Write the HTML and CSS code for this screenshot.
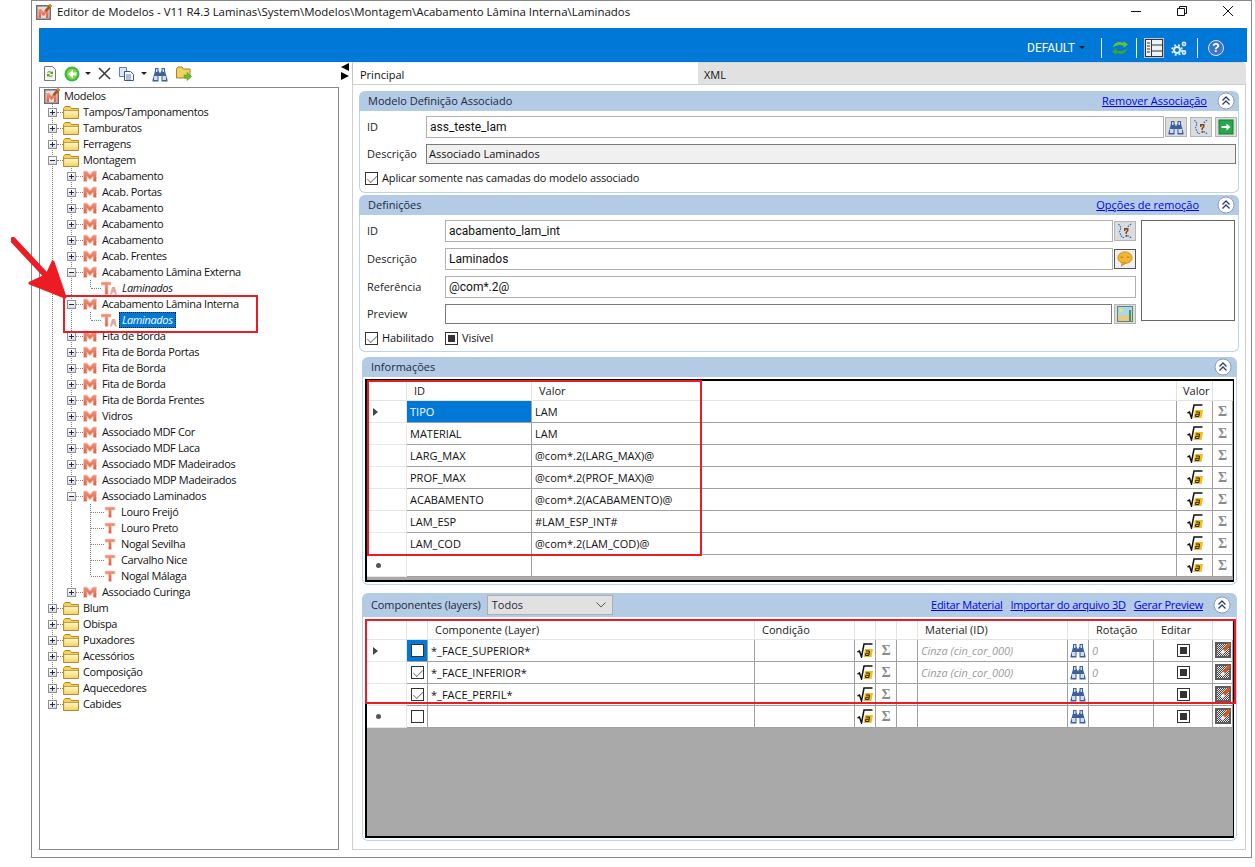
FILE: index.html
```html
<!DOCTYPE html>
<html lang="pt">
<head>
<meta charset="utf-8">
<title>Editor de Modelos</title>
<link rel="stylesheet" href="styles.css">
</head>
<body>
<svg class="defs" width="0" height="0" aria-hidden="true">
  <defs>
    <linearGradient id="salmon" x1="0" y1="0" x2="0" y2="1"><stop offset="0" stop-color="#f2957c"/><stop offset="1" stop-color="#e25c42"/></linearGradient>
    <symbol id="m" viewBox="0 0 14 12"><path d="M.5 11.500V1H4l3 3.600L10 1h3.500v10.500H10V6.500L7 9.800 4 6.500v5z" fill="url(#salmon)" stroke="#f8cdbf" stroke-width=".8"/></symbol>
    <symbol id="logo" viewBox="0 0 16 16"><rect x=".75" y="1.750" width="13.500" height="13.500" fill="#e4dcda" stroke="#6e6e6e" stroke-width="1.500"/><path d="M2.500 14V5h2.500l2.500 3L10 5h2.500v9H10V9.500L7.500 12 5 9.500V14z" fill="url(#salmon)"/><path d="M8.500 6.500 14 0l2 2-5.500 6z" fill="#a5561c"/><path d="M12.500 1.500 14 0l2 2-1.500 1.500z" fill="#e2812c"/></symbol>
    <linearGradient id="fold" x1="0" y1="0" x2="0" y2="1"><stop offset="0" stop-color="#fff3c0"/><stop offset="1" stop-color="#f6d368"/></linearGradient>
    <symbol id="folder" viewBox="0 0 16 14"><path d="M.5 3.500 2 1.500h5l1.500 2h7v10H.5z" fill="#f3d067" stroke="#b08c2c"/><path d="M1.500 6h13.500v7H1.500z" fill="url(#fold)"/><path d="M.5 5.500h15" stroke="#c4a035"/></symbol>
    <symbol id="ta" viewBox="0 0 16 14"><path d="M0 1h10v3H7v9.500H4V4H0z" fill="url(#salmon)" stroke="#f8cdbf" stroke-width=".6"/><path d="M9 13.500 11 6h3l2 7.500h-2l-.4-2h-2.200l-.4 2z" fill="#e6a79a"/></symbol>
    <symbol id="t" viewBox="0 0 12 12"><path d="M1 1h10v3H7.500v7.500h-3V4H1z" fill="url(#salmon)" stroke="#f8cdbf" stroke-width=".6"/></symbol>
    <symbol id="binoc" viewBox="0 0 16 16"><path d="M3 2h3.500v3H7v1.500h2V5h.5V2H13v3l2.500 9v1.500H9.500V10h-3v5.500H.5V14L3 5z" fill="#3c5f9e"/><path d="M2 10h3.500v4H2zM10.500 10H14v4h-3.500zM4 3h1.500v3H4zM10.500 3H12v3h-1.500z" fill="#cfdcf0"/></symbol>
    <symbol id="path" viewBox="0 0 16 16"><path d="M1.500 1 4 4.500 2.500 9 5 14.500h2.500M14 1 10 4.500M10.500 12.500l4 2.500" fill="none" stroke="#1f74e0" stroke-width="1.200" stroke-dasharray="1.600 1"/><path d="M7 5h4.500v3L10 9.500V11H8.500V9l1.300-1.200V6.500H8.500V8H7z" fill="#7a4a1c"/><rect x="8.500" y="12" width="1.800" height="1.800" fill="#7a4a1c"/></symbol>
    <symbol id="go" viewBox="0 0 16 16"><rect x="1" y="1" width="14" height="14" fill="#27a84a" stroke="#16783a"/><path d="M3.500 7h5V4.500L12.500 8l-4 3.500V9h-5z" fill="#fff"/></symbol>
    <symbol id="speech" viewBox="0 0 18 18"><ellipse cx="9" cy="7.500" rx="8" ry="6.500" fill="#f2b632" stroke="#c98a16"/><path d="M6 13l-1 4 5-3.500z" fill="#f2b632" stroke="#c98a16"/><path d="M4 7h3M11 7h3" stroke="#b06d10"/></symbol>
    <symbol id="image" viewBox="0 0 16 16"><rect x=".5" y=".5" width="15" height="15" fill="#a9d9ee" stroke="#6a7f70"/><circle cx="4" cy="4" r="1.700" fill="#f6e65a"/><path d="M1 9h14v6H1z" fill="#e3c98a"/><path d="M12 4h2v11h-2z" fill="#3f9a56"/></symbol>
    <symbol id="sqrt" viewBox="0 0 16 16"><path d="M.5 10l2-1 2 6L7 2h8.500" fill="none" stroke="#111" stroke-width="1.500"/><path d="M8 7h8l-1.500 8h-8z" fill="#f6bd16"/><path d="M9 9h3.500l-.7 4.500H8.500l.3-2.200h3" fill="none" stroke="#1c1c1c"/></symbol>
    <pattern id="checker" width="2" height="2" patternUnits="userSpaceOnUse"><rect width="2" height="2" fill="#e8e8e8"/><rect width="1" height="1" fill="#444"/><rect x="1" y="1" width="1" height="1" fill="#444"/></pattern>
    <symbol id="brush" viewBox="0 0 16 16"><rect x="1" y="1" width="14" height="14" fill="url(#checker)" stroke="#5c5c5c" stroke-width="2"/><path d="M8 7.500 13.500.5 16 3l-6 6.500z" fill="#d9561c"/><path d="M5.500 10 8 7.500 10 9.500 7.500 12z" fill="#f2f2f2"/></symbol>
    <symbol id="collapse" viewBox="0 0 18 18"><circle cx="9" cy="9" r="8" fill="#fff" stroke="#8f9db8"/><path d="M5.500 8.500 9 5l3.500 3.500M5.500 12.500 9 9l3.500 3.500" fill="none" stroke="#2c3f70" stroke-width="1.300"/></symbol>
  </defs>
</svg>

<div class="window">
  <header class="titlebar">
    <svg class="title-ico"><use href="#logo"/></svg>
    <span class="title-text">Editor de Modelos - V11 R4.3 Laminas\System\Modelos\Montagem\Acabamento Lâmina Interna\Laminados</span>
    <div class="winbtns">
      <button class="winbtn"><svg width="12" height="12" viewBox="0 0 12 12"><path d="M1 6.500h10" stroke="#111"/></svg></button>
      <button class="winbtn"><svg width="12" height="12" viewBox="0 0 12 12"><path d="M1.500 3.500h7v7h-7zM3.500 3.500v-2h7v7h-2" fill="none" stroke="#111"/></svg></button>
      <button class="winbtn"><svg width="12" height="12" viewBox="0 0 12 12"><path d="M1 1l10 10M11 1 1 11" stroke="#111"/></svg></button>
    </div>
  </header>

  <div class="content">
    <div class="bluebar">
      <span class="profile">DEFAULT</span><i class="caret dark-c"></i>
      <i class="bsep s1"></i>
      <svg class="bico" viewBox="0 0 16 16"><path d="M1 7.500C1.500 3 6.500.5 11.500 3V1L16 4.500l-4.500 3.500V5.800C8 4 4 5 1 7.500z" fill="#62c234"/><path d="M15 8.500C14.500 13 9.500 15.500 4.500 13v2L0 11.500 4.500 8v2.200C8 12 12 11 15 8.500z" fill="#3fa32b"/></svg>
      <i class="bsep s2"></i>
      <span class="hl"><svg width="18" height="18" viewBox="0 0 18 18"><rect x=".5" y=".5" width="17" height="17" fill="#eef1f5" stroke="#333"/><path d="M6.500 1v16M6.500 6h11M6.500 12h11M2 4h3M2 7h3M2 10h3M2 13h3" stroke="#333"/></svg></span>
      <svg class="bico gears" viewBox="0 0 16 16"><circle cx="6" cy="10" r="3" fill="none" stroke="#e3ecf6" stroke-width="2"/><circle cx="6" cy="10" r="5" fill="none" stroke="#e3ecf6" stroke-width="1.600" stroke-dasharray="2 2"/><circle cx="13" cy="4" r="1.600" fill="none" stroke="#e3ecf6" stroke-width="1.600"/><circle cx="13" cy="12.500" r="1.600" fill="none" stroke="#e3ecf6" stroke-width="1.600"/></svg>
      <i class="bsep s3"></i>
      <span class="help">?</span>
    </div>

    <div class="split">
      <aside class="leftcol">
        <div class="toolbar">
          <svg class="tb doc" viewBox="0 0 12 15"><path d="M.5.500h8l3 3v11H.5z" fill="#f6f6f0" stroke="#778"/><path d="M3 7c.5-2 3-2.500 5-1l1-1v3H6l1-1C6 6 4.500 6 3 7zM9 9c-.5 2-3 2.500-5 1l-1 1V8h3l-1 1c1 1 2.500 1 4 0z" fill="#5aa02c"/></svg>
          <svg class="tb back" viewBox="0 0 16 16"><circle cx="8" cy="8" r="7.500" fill="#39b54a"/><circle cx="8" cy="8" r="5.500" fill="#7fd63f"/><path d="M9 3.500v3h3.500v3H9v3L4 8z" fill="#fff"/></svg>
          <i class="caret c1"></i>
          <svg class="tb del" viewBox="0 0 13 13"><path d="M1 1l11 11M12 1 1 12" stroke="#3c3c3c" stroke-width="1.600"/></svg>
          <svg class="tb copy" viewBox="0 0 15 14"><path d="M.5.500h7v9h-7z" fill="#dce7f7" stroke="#5b7fb5"/><path d="M5.500 4.500h6l3 3v6h-9z" fill="#fff" stroke="#35579a"/><path d="M7 8h5M7 10h5M7 12h5" stroke="#5b7fb5"/></svg>
          <i class="caret c2"></i>
          <svg class="tb find"><use href="#binoc"/></svg>
          <svg class="tb fwd" viewBox="0 0 16 15"><path d="M.5 3 2 1h4l1.500 2h6.500v9H.5z" fill="#f2d25e" stroke="#a5852a"/><path d="M8 9h3V6.500l4.500 4-4.500 4V12H8z" fill="#6cbf2f" stroke="#4a8f1f" stroke-width=".5"/></svg>
        </div>
        <nav class="tree">
          <div class="row root"><svg class="ico-logo"><use href="#logo"/></svg><span class="lab-root">Modelos</span></div>
          <ul class="l1">
            <li><div class="row"><i class="exp plus"></i><i class="conn"></i><svg class="ico-f"><use href="#folder"/></svg><span class="lab">Tampos/Tamponamentos</span></div></li>
            <li><div class="row"><i class="exp plus"></i><i class="conn"></i><svg class="ico-f"><use href="#folder"/></svg><span class="lab">Tamburatos</span></div></li>
            <li><div class="row"><i class="exp plus"></i><i class="conn"></i><svg class="ico-f"><use href="#folder"/></svg><span class="lab">Ferragens</span></div></li>
            <li><div class="row"><i class="exp"></i><i class="conn"></i><svg class="ico-f"><use href="#folder"/></svg><span class="lab">Montagem</span></div>
              <ul class="l2">
                <li><div class="row"><i class="exp plus"></i><i class="conn"></i><svg class="ico-m"><use href="#m"/></svg><span class="lab2">Acabamento</span></div></li>
                <li><div class="row"><i class="exp plus"></i><i class="conn"></i><svg class="ico-m"><use href="#m"/></svg><span class="lab2">Acab. Portas</span></div></li>
                <li><div class="row"><i class="exp plus"></i><i class="conn"></i><svg class="ico-m"><use href="#m"/></svg><span class="lab2">Acabamento</span></div></li>
                <li><div class="row"><i class="exp plus"></i><i class="conn"></i><svg class="ico-m"><use href="#m"/></svg><span class="lab2">Acabamento</span></div></li>
                <li><div class="row"><i class="exp plus"></i><i class="conn"></i><svg class="ico-m"><use href="#m"/></svg><span class="lab2">Acabamento</span></div></li>
                <li><div class="row"><i class="exp plus"></i><i class="conn"></i><svg class="ico-m"><use href="#m"/></svg><span class="lab2">Acab. Frentes</span></div></li>
                <li><div class="row"><i class="exp"></i><i class="conn"></i><svg class="ico-m"><use href="#m"/></svg><span class="lab2">Acabamento Lâmina Externa</span></div>
                  <ul class="l3"><li><div class="row"><i class="conn long"></i><svg class="ico-ta"><use href="#ta"/></svg><span class="lab3">Laminados</span></div></li></ul>
                </li>
                <li><div class="row"><i class="exp"></i><i class="conn"></i><svg class="ico-m"><use href="#m"/></svg><span class="lab2">Acabamento Lâmina Interna</span></div>
                  <ul class="l3"><li><div class="row"><i class="conn long"></i><svg class="ico-ta"><use href="#ta"/></svg><span class="lab3 selected">Laminados</span></div></li></ul>
                </li>
                <li><div class="row"><i class="exp plus"></i><i class="conn"></i><svg class="ico-m"><use href="#m"/></svg><span class="lab2">Fita de Borda</span></div></li>
                <li><div class="row"><i class="exp plus"></i><i class="conn"></i><svg class="ico-m"><use href="#m"/></svg><span class="lab2">Fita de Borda Portas</span></div></li>
                <li><div class="row"><i class="exp plus"></i><i class="conn"></i><svg class="ico-m"><use href="#m"/></svg><span class="lab2">Fita de Borda</span></div></li>
                <li><div class="row"><i class="exp plus"></i><i class="conn"></i><svg class="ico-m"><use href="#m"/></svg><span class="lab2">Fita de Borda</span></div></li>
                <li><div class="row"><i class="exp plus"></i><i class="conn"></i><svg class="ico-m"><use href="#m"/></svg><span class="lab2">Fita de Borda Frentes</span></div></li>
                <li><div class="row"><i class="exp plus"></i><i class="conn"></i><svg class="ico-m"><use href="#m"/></svg><span class="lab2">Vidros</span></div></li>
                <li><div class="row"><i class="exp plus"></i><i class="conn"></i><svg class="ico-m"><use href="#m"/></svg><span class="lab2">Associado MDF Cor</span></div></li>
                <li><div class="row"><i class="exp plus"></i><i class="conn"></i><svg class="ico-m"><use href="#m"/></svg><span class="lab2">Associado MDF Laca</span></div></li>
                <li><div class="row"><i class="exp plus"></i><i class="conn"></i><svg class="ico-m"><use href="#m"/></svg><span class="lab2">Associado MDF Madeirados</span></div></li>
                <li><div class="row"><i class="exp plus"></i><i class="conn"></i><svg class="ico-m"><use href="#m"/></svg><span class="lab2">Associado MDP Madeirados</span></div></li>
                <li><div class="row"><i class="exp"></i><i class="conn"></i><svg class="ico-m"><use href="#m"/></svg><span class="lab2">Associado Laminados</span></div>
                  <ul class="l3">
                    <li><div class="row"><i class="conn longer"></i><svg class="ico-t"><use href="#t"/></svg><span class="lab3">Louro Freijó</span></div></li>
                    <li><div class="row"><i class="conn longer"></i><svg class="ico-t"><use href="#t"/></svg><span class="lab3">Louro Preto</span></div></li>
                    <li><div class="row"><i class="conn longer"></i><svg class="ico-t"><use href="#t"/></svg><span class="lab3">Nogal Sevilha</span></div></li>
                    <li><div class="row"><i class="conn longer"></i><svg class="ico-t"><use href="#t"/></svg><span class="lab3">Carvalho Nice</span></div></li>
                    <li><div class="row"><i class="conn longer"></i><svg class="ico-t"><use href="#t"/></svg><span class="lab3">Nogal Málaga</span></div></li>
                  </ul>
                </li>
                <li><div class="row"><i class="exp plus"></i><i class="conn"></i><svg class="ico-m"><use href="#m"/></svg><span class="lab2">Associado Curinga</span></div></li>
              </ul>
            </li>
            <li><div class="row"><i class="exp plus"></i><i class="conn"></i><svg class="ico-f"><use href="#folder"/></svg><span class="lab">Blum</span></div></li>
            <li><div class="row"><i class="exp plus"></i><i class="conn"></i><svg class="ico-f"><use href="#folder"/></svg><span class="lab">Obispa</span></div></li>
            <li><div class="row"><i class="exp plus"></i><i class="conn"></i><svg class="ico-f"><use href="#folder"/></svg><span class="lab">Puxadores</span></div></li>
            <li><div class="row"><i class="exp plus"></i><i class="conn"></i><svg class="ico-f"><use href="#folder"/></svg><span class="lab">Acessórios</span></div></li>
            <li><div class="row"><i class="exp plus"></i><i class="conn"></i><svg class="ico-f"><use href="#folder"/></svg><span class="lab">Composição</span></div></li>
            <li><div class="row"><i class="exp plus"></i><i class="conn"></i><svg class="ico-f"><use href="#folder"/></svg><span class="lab">Aquecedores</span></div></li>
            <li><div class="row"><i class="exp plus"></i><i class="conn"></i><svg class="ico-f"><use href="#folder"/></svg><span class="lab">Cabides</span></div></li>
          </ul>
        </nav>
      </aside>

      <div class="splitter"><i class="arr-l"></i><i class="arr-r"></i></div>

      <main class="rightcol">
        <div class="tabs"><span class="tab active">Principal</span><span class="tab">XML</span></div>
        <div class="tabpage">
          <section class="sec s-assoc">
            <div class="sec-h"><span>Modelo Definição Associado</span><a class="link push">Remover Associação</a><svg class="coll"><use href="#collapse"/></svg></div>
            <div class="sec-b">
              <div class="field f1"><label class="lbl w59">ID</label><span class="input grow">ass_teste_lam</span>
                <span class="btn b1"><svg><use href="#binoc"/></svg></span><span class="btn"><svg><use href="#path"/></svg></span><span class="btn"><svg><use href="#go"/></svg></span></div>
              <div class="field f2"><label class="lbl w59">Descrição</label><span class="input grow disabled">Associado Laminados</span></div>
              <div class="field f3"><i class="chk on"></i><span>Aplicar somente nas camadas do modelo associado</span></div>
            </div>
          </section>

          <section class="sec s-def">
            <div class="sec-h"><span>Definições</span><a class="link push">Opções de remoção</a><svg class="coll c-wide"><use href="#collapse"/></svg></div>
            <div class="sec-b def-b">
              <div class="def-form">
                <div class="field"><label class="lbl w78">ID</label><span class="input grow">acabamento_lam_int</span><span class="btn b2"><svg><use href="#path"/></svg></span></div>
                <div class="field"><label class="lbl w78">Descrição</label><span class="input grow">Laminados</span><span class="btn b2 pressed"><svg><use href="#speech"/></svg></span></div>
                <div class="field"><label class="lbl w78">Referência</label><span class="input grow">@com*.2@</span></div>
                <div class="field short"><label class="lbl w78">Preview</label><span class="input grow dark"></span><span class="btn b2 b3"><svg><use href="#image"/></svg></span></div>
                <div class="field checks"><i class="chk on"></i><span class="hab">Habilitado</span><i class="chk sq"></i><span>Visível</span></div>
              </div>
              <div class="preview"></div>
            </div>
          </section>

          <section class="sec s-info">
            <div class="sec-h"><span>Informações</span><svg class="coll push"><use href="#collapse"/></svg></div>
            <div class="sec-b grid-b">
              <div class="gridbox gb-info">
                <table class="dg info">
                  <colgroup><col class="c40"><col class="c125"><col class="c645"><col class="c36"><col class="c20"></colgroup>
                  <thead><tr><th></th><th>ID</th><th>Valor</th><th class="ctr">Valor</th><th></th></tr></thead>
                  <tbody>
                    <tr><td class="rh"><i class="cur"></i></td><td class="sel">TIPO</td><td>LAM</td><td class="ic"><svg><use href="#sqrt"/></svg></td><td class="sg">Σ</td></tr>
                    <tr><td class="rh"></td><td>MATERIAL</td><td>LAM</td><td class="ic"><svg><use href="#sqrt"/></svg></td><td class="sg">Σ</td></tr>
                    <tr><td class="rh"></td><td>LARG_MAX</td><td>@com*.2(LARG_MAX)@</td><td class="ic"><svg><use href="#sqrt"/></svg></td><td class="sg">Σ</td></tr>
                    <tr><td class="rh"></td><td>PROF_MAX</td><td>@com*.2(PROF_MAX)@</td><td class="ic"><svg><use href="#sqrt"/></svg></td><td class="sg">Σ</td></tr>
                    <tr><td class="rh"></td><td>ACABAMENTO</td><td>@com*.2(ACABAMENTO)@</td><td class="ic"><svg><use href="#sqrt"/></svg></td><td class="sg">Σ</td></tr>
                    <tr><td class="rh"></td><td>LAM_ESP</td><td>#LAM_ESP_INT#</td><td class="ic"><svg><use href="#sqrt"/></svg></td><td class="sg">Σ</td></tr>
                    <tr><td class="rh"></td><td>LAM_COD</td><td>@com*.2(LAM_COD)@</td><td class="ic"><svg><use href="#sqrt"/></svg></td><td class="sg">Σ</td></tr>
                    <tr><td class="rh"><i class="new"></i></td><td></td><td></td><td class="ic"><svg><use href="#sqrt"/></svg></td><td class="sg">Σ</td></tr>
                  </tbody>
                </table>
                <div class="gray"></div>
              </div>
            </div>
          </section>

          <section class="sec s-comp">
            <div class="sec-h h24"><span class="comp-title">Componentes (layers)</span><span class="select">Todos<svg width="10" height="6" viewBox="0 0 10 6"><path d="M.5.500 5 5 9.500.500" fill="none" stroke="#555"/></svg></span><a class="link push tight">Editar Material</a><a class="link g8 tight">Importar do arquivo 3D</a><a class="link g8 tight">Gerar Preview</a><svg class="coll"><use href="#collapse"/></svg></div>
            <div class="sec-b grid-b">
              <div class="gridbox gb-comp">
                <table class="dg comp">
                  <colgroup><col class="c40"><col class="c21"><col class="c327"><col class="c100"><col class="c21"><col class="c21"><col class="c21"><col class="c150"><col class="c21"><col class="c65"><col class="c59"><col class="c20"></colgroup>
                  <thead><tr><th></th><th></th><th>Componente (Layer)</th><th>Condição</th><th></th><th></th><th></th><th>Material (ID)</th><th></th><th>Rotação</th><th>Editar</th><th></th></tr></thead>
                  <tbody>
                    <tr><td class="rh"><i class="cur"></i></td><td class="sel ck"><i class="chk"></i></td><td>*_FACE_SUPERIOR*</td><td></td><td class="ic"><svg><use href="#sqrt"/></svg></td><td class="sg">Σ</td><td></td><td class="mut">Cinza (cin_cor_000)</td><td class="ic"><svg><use href="#binoc"/></svg></td><td class="mut">0</td><td class="ck"><i class="chk sq"></i></td><td class="ic"><svg><use href="#brush"/></svg></td></tr>
                    <tr><td class="rh"></td><td class="ck"><i class="chk on"></i></td><td>*_FACE_INFERIOR*</td><td></td><td class="ic"><svg><use href="#sqrt"/></svg></td><td class="sg">Σ</td><td></td><td class="mut">Cinza (cin_cor_000)</td><td class="ic"><svg><use href="#binoc"/></svg></td><td class="mut">0</td><td class="ck"><i class="chk sq"></i></td><td class="ic"><svg><use href="#brush"/></svg></td></tr>
                    <tr><td class="rh"></td><td class="ck"><i class="chk on"></i></td><td>*_FACE_PERFIL*</td><td></td><td class="ic"><svg><use href="#sqrt"/></svg></td><td class="sg">Σ</td><td></td><td></td><td class="ic"><svg><use href="#binoc"/></svg></td><td></td><td class="ck"><i class="chk sq"></i></td><td class="ic"><svg><use href="#brush"/></svg></td></tr>
                    <tr><td class="rh"><i class="new"></i></td><td class="ck"><i class="chk"></i></td><td></td><td></td><td class="ic"><svg><use href="#sqrt"/></svg></td><td class="sg">Σ</td><td></td><td></td><td class="ic"><svg><use href="#binoc"/></svg></td><td></td><td class="ck"><i class="chk sq"></i></td><td class="ic"><svg><use href="#brush"/></svg></td></tr>
                  </tbody>
                </table>
                <div class="gray"></div>
              </div>
            </div>
          </section>
        </div>
      </main>
    </div>
  </div>
</div>

<div class="mark m-tree"></div>
<div class="mark m-info"></div>
<div class="mark m-comp"></div>
<svg class="arrow" width="62" height="66" viewBox="0 0 62 66"><path d="M2 3 44 48" stroke="#ed1c24" stroke-width="6" stroke-linecap="round" fill="none"/><path d="M54 60 19 46 36 38 42 25Z" fill="#ed1c24" stroke="#ed1c24" stroke-width="3" stroke-linejoin="round"/></svg>
</body>
</html>
```

FILE: styles.css
```css
* { box-sizing: border-box; }
html, body { margin: 0; height: 867px; background: #fff; overflow: hidden; }
body { font: 11px/16px "Open Sans", "Liberation Sans", sans-serif; color: #111; }
.defs { position: absolute; }
i { display: block; flex: none; font-style: normal; }

.window { margin-left: 31px; width: 1221px; height: 858px; border: 1px solid #86888a; display: flex; flex-direction: column; }
.titlebar { height: 27px; flex: none; display: flex; align-items: center; padding: 0 0 6px 4px; }
.title-ico { width: 16px; height: 16px; flex: none; margin-right: 5px; }
.title-text { font-size: 11.450px; white-space: nowrap; }
.winbtns { margin-left: auto; display: flex; margin-top: -2px; }
.winbtn { width: 46px; height: 20px; padding: 0; border: 0; background: none; display: flex; align-items: center; justify-content: center; }

.content { flex: 1; min-height: 0; padding: 0 4px 7px 7px; display: flex; flex-direction: column; }
.bluebar { height: 34px; flex: none; background: #0078d7; color: #fff; display: flex; align-items: center; padding: 5px 0 0 988px; }
.profile { width: 46px; font: 12px/16px "Roboto", sans-serif; }
.caret { width: 0; height: 0; border: 3px solid transparent; border-top: 3px solid #222; border-bottom: 0; }
.dark-c { margin-left: 6px; }
.bsep { width: 1px; height: 20px; background: #e8f1fa; }
.s1 { margin-left: 16px; }
.bico { width: 16px; height: 16px; margin-left: 10px; }
.s2 { margin-left: 8px; }
.hl { width: 20px; height: 20px; margin-left: 7px; background: #b9c7d8; display: flex; align-items: center; justify-content: center; }
.gears { margin-left: 7px; }
.s3 { margin-left: 10px; }
.help { width: 16px; height: 16px; margin-left: 10px; border-radius: 50%; background: #3f74c8; border: 1px solid #dfe9f5; color: #fff; font: bold 12px/14px "Liberation Sans", sans-serif; text-align: center; }

.split { flex: 1; min-height: 0; display: flex; }
.leftcol { width: 300px; flex: none; display: flex; flex-direction: column; }
.toolbar { height: 25px; flex: none; display: flex; align-items: center; padding-bottom: 2px; }
.tb { flex: none; display: block; }
.doc { width: 12px; height: 15px; margin-left: 5px; }
.back { width: 16px; height: 16px; margin-left: 8px; }
.c1 { margin-left: 5px; }
.del { width: 13px; height: 13px; margin-left: 7px; }
.copy { width: 15px; height: 14px; margin-left: 8px; }
.c2 { margin-left: 7px; }
.find { width: 16px; height: 16px; margin-left: 5px; }
.fwd { width: 16px; height: 15px; margin-left: 8px; }

.tree { flex: 1; border: 1px solid #86888a; background: #fff; overflow: hidden; letter-spacing: -.35px; }
.tree ul { list-style: none; margin: 0; padding: 0; }
.tree li { padding-left: 1px; background: repeating-linear-gradient(to bottom, #808080 0 1px, transparent 1px 2px) 0 0 / 1px 100% no-repeat; }
.tree li:last-child { background-size: 1px 8px; }
.tree .l1 { margin-left: 12px; }
.tree .l2, .tree .l3 { margin-left: 18px; }
.row { height: 16px; display: flex; align-items: center; white-space: nowrap; }
.root { padding-left: 4px; }
.ico-logo { width: 16px; height: 16px; flex: none; }
.lab-root { margin-left: 4px; }
.exp { width: 9px; height: 9px; margin-left: -5px; border: 1px solid #919191; background: linear-gradient(#1d2c55, #1d2c55) center / 5px 1px no-repeat, linear-gradient(#fff, #dcdcdc); }
.exp.plus { background: linear-gradient(#1d2c55, #1d2c55) center / 5px 1px no-repeat, linear-gradient(#1d2c55, #1d2c55) center / 1px 5px no-repeat, linear-gradient(#fff, #dcdcdc); }
.conn { width: 6px; height: 0; border-top: 1px dotted #808080; }
.l2 .conn { width: 7px; }
.l3 .conn.long { width: 10px; }
.l3 .conn.longer { width: 13px; }
.ico-f { width: 16px; height: 14px; flex: none; }
.ico-m { width: 14px; height: 12px; flex: none; }
.ico-ta { width: 16px; height: 14px; flex: none; }
.ico-t { width: 12px; height: 12px; flex: none; }
.lab { margin-left: 4px; }
.lab2 { margin-left: 5px; }
.lab3 { margin-left: 5px; }
.ico-ta + .lab3 { font-style: italic; }
.lab3.selected { margin-left: 2px; padding: 0 3px; background: #0078d7; color: #fff; outline: 1px dotted #111; outline-offset: -1px; }

.splitter { width: 13px; flex: none; padding: 1px 0 0 2px; }
.arr-l { width: 0; height: 0; border: 4px solid transparent; border-left: 0; border-right: 8px solid #000; }
.arr-r { width: 0; height: 0; border: 4px solid transparent; border-right: 0; border-left: 8px solid #000; margin-top: 1px; }

.rightcol { flex: 1; min-width: 0; display: flex; flex-direction: column; }
.tabs { height: 22px; flex: none; display: flex; }
.tab { padding-left: 7px; line-height: 24px; }
.tab.active { width: 345px; border-left: 1px solid #c6c6c6; border-top: 1px solid #eee; background: #fff; }
.tab:not(.active) { flex: 1; background: #e1e1e1; border-top: 1px solid #d4d4d4; border-radius: 0 5px 0 0; margin: 0 1px; padding-left: 6px; }
.tabpage { flex: 1; border: 1px solid #cfcfcf; margin-right: 1px; min-height: 0; padding: 6px 0 0 6px; }

.sec { display: flex; flex-direction: column; }
.sec-h { height: 20px; flex: none; display: flex; align-items: center; background: #b3cbe5; border-radius: 6px 6px 0 0; padding: 0 4px 0 9px; white-space: nowrap; color: #1b2a40; }
.sec-b { flex: 1; border: 1px solid #bcd3ec; border-top: 0; border-radius: 0 0 6px 6px; }
.push { margin-left: auto; }
.link { color: #0000ee; text-decoration: underline; }
.tight { letter-spacing: -.25px; }
.g8 { margin-left: 8px; }
.coll { width: 18px; height: 18px; flex: none; margin-left: 10px; }
.coll.c-wide { margin-left: 18px; }
.coll.push { margin-left: auto; }
.comp-title { letter-spacing: -.1px; }

.s-assoc { width: 880px; height: 102px; }
.s-def { width: 880px; height: 157px; margin-top: 2px; }
.s-info { width: 875px; height: 228px; margin: 5px 0 0 3px; }
.s-comp { width: 875px; height: 248px; margin: 8px 0 0 3px; }
.s-info .sec-h { padding-right: 5px; }
.s-comp .sec-h { padding-right: 6px; }
.h24 { height: 24px; }

.field { display: flex; align-items: center; height: 22px; }
.s-assoc .sec-b { padding: 5px 1px 0 7px; }
.f2 { height: 20px; margin-top: 6px; padding-right: 1px; }
.f3 { height: 14px; margin: 7px 0 0 -2px; letter-spacing: -.15px; }
.lbl { flex: none; color: #222; }
.w59 { width: 59px; }
.w78 { width: 78px; }
.input { height: 100%; border: 1px solid #b0b0b0; padding-left: 3px; font: 12px/20px "Roboto", sans-serif; white-space: nowrap; overflow: hidden; background: #fff; }
.input.disabled { background: #f0f0f0; border-color: #7a7a7a; padding-left: 2px; font: 11px/18px "Open Sans", sans-serif; }
.grow { flex: 1; min-width: 0; }
.dark { border-color: #7a7a7a; margin-right: 1px; }
.btn { width: 22px; height: 20px; flex: none; margin-left: 3px; background: #dcdcdc; border: 1px solid #b4b4b4; display: flex; align-items: center; justify-content: center; }
.btn svg { width: 16px; height: 16px; }
.b1 { margin-left: 1px; }
.b2 { margin-left: 1px; }
.pressed { background: #efefef; border: 1px solid #555; }
.s-def .sec-b.def-b { display: flex; padding: 5px 3px 0 7px; }
.def-form { flex: 1; min-width: 0; display: flex; flex-direction: column; gap: 6px; }
.short { height: 20px; }
.checks { height: 12px; margin: 2px 0 0 -2px; letter-spacing: -.1px; }
.hab { width: 63px; }
.preview { width: 94px; height: 101px; margin-left: 5px; border: 1px solid #666; background: #fff; flex: none; }

.chk { width: 13px; height: 13px; flex: none; margin-right: 4px; border: 1px solid #333; background: #fff; }
.chk.on::after { content: ""; display: block; width: 9px; height: 5px; margin: 2px 0 0 1px; border-left: 1.500px solid #777; border-bottom: 1.500px solid #777; transform: rotate(-45deg) scale(.9); }
.chk.sq { background: linear-gradient(#333, #333) center / 7px 7px no-repeat, #fff; }

.grid-b { padding: 2px; display: flex; }
.gridbox { flex: 1; display: flex; flex-direction: column; border: solid #000; border-width: 2px 1px 2px 2px; background: #fff; }
.dg { flex: none; width: 866px; border-collapse: separate; border-spacing: 0; table-layout: fixed; }
.gray { flex: 1; background: #a9a9a9; }
.c20 { width: 20px; } .c21 { width: 21px; } .c36 { width: 36px; } .c40 { width: 40px; } .c59 { width: 59px; } .c65 { width: 65px; } .c100 { width: 100px; } .c125 { width: 125px; } .c150 { width: 150px; } .c327 { width: 327px; } .c645 { width: 645px; }
.dg th { height: 20px; font-weight: 400; text-align: left; padding: 0 0 0 7px; border-right: 1px solid #e3e3e3; border-bottom: 1px solid #e3e3e3; background: #fff; color: #1a1a1a; white-space: nowrap; }
.comp th { height: 19px; }
.dg th.ctr { padding-left: 6px; }
.dg td { height: 22px; padding: 0 0 0 3px; border-right: 1px solid #a0a0a0; border-bottom: 1px solid #a0a0a0; white-space: nowrap; overflow: hidden; }
.dg td.rh { padding: 0 0 0 6px; border-color: #e6e6e6; }
.dg td.sel { background: #0078d7; color: #fff; }
.cur { width: 0; height: 0; border: 4px solid transparent; border-right: 0; border-left: 5px solid #444; }
.new { width: 5px; height: 5px; margin-left: 3px; border-radius: 50%; background: #555; }
.dg .ic { padding: 0; text-align: center; }
.ic svg { width: 16px; height: 16px; display: block; margin: -1px auto 1px; }
.dg .sg { padding: 0; text-align: center; color: #8a8a8a; font: bold 14px "Liberation Serif", serif; }
.dg .ck { padding: 0; }
.ck .chk { margin: 0 auto; }
.mut { color: #9a9a9a; font-style: italic; }
.select { width: 126px; height: 20px; margin-left: 6px; padding: 0 6px 0 4px; border: 1px solid #adadad; background: #e1e1e1; display: flex; align-items: center; justify-content: space-between; }

.mark { position: absolute; border: 2px solid #ed1c24; pointer-events: none; }
.m-tree { left: 63px; top: 295px; width: 195px; height: 38px; }
.m-info { left: 367px; top: 380px; width: 335px; height: 176px; }
.m-comp { left: 365px; top: 619px; width: 871px; height: 85px; }
.arrow { position: absolute; left: 11px; top: 237px; }
```
